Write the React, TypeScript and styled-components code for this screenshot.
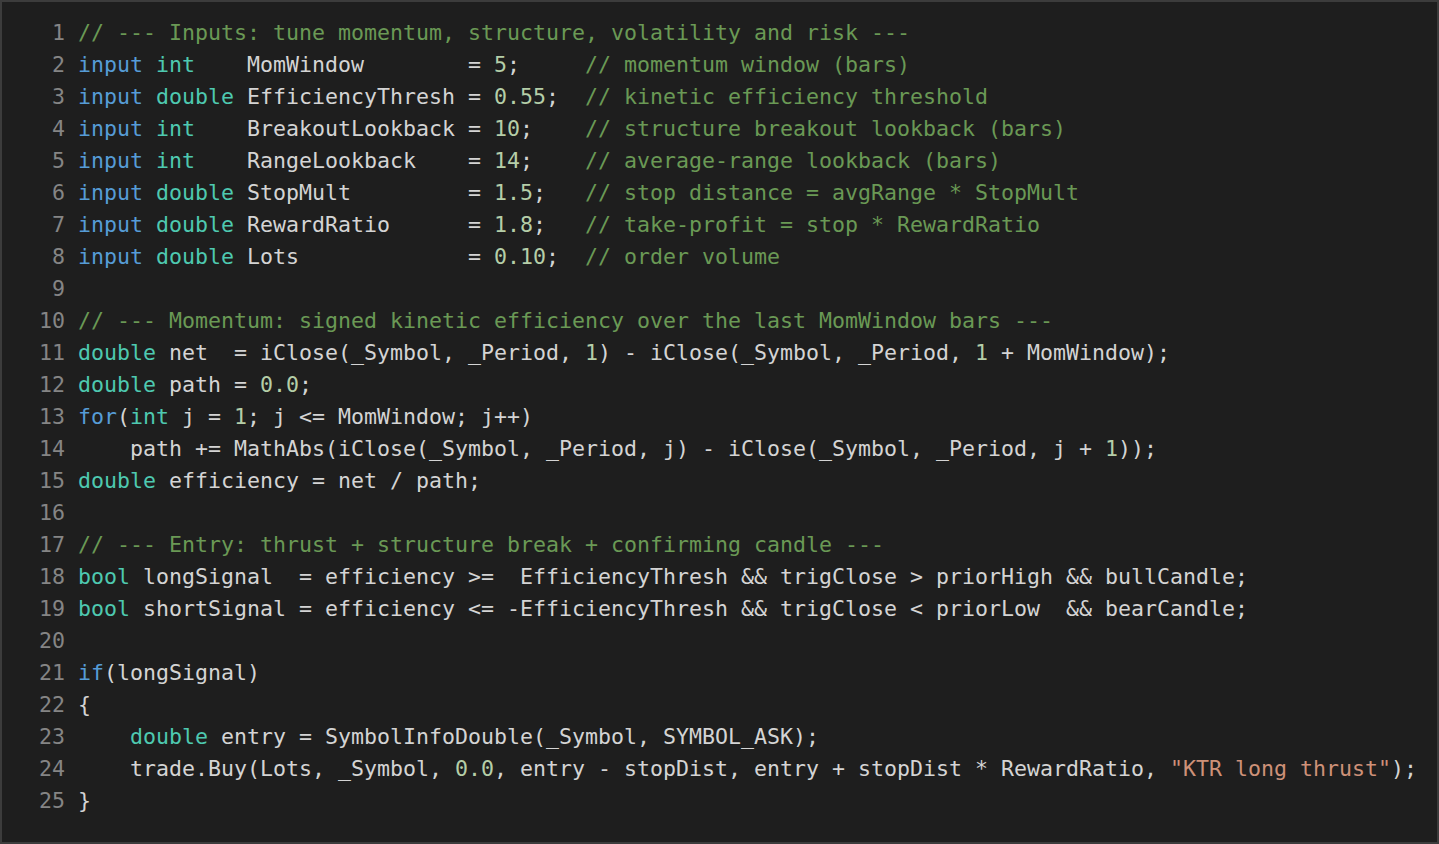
import React from "react";
import styled, { createGlobalStyle } from "styled-components";

const GlobalStyle = createGlobalStyle`
  html, body {
    margin: 0;
    padding: 0;
    background: #1e1e1e;
  }
  #root {
    height: 100vh;
  }
`;

const Frame = styled.div`
  box-sizing: border-box;
  width: 100vw;
  height: 100vh;
  background: #1e1e1e;
  border: 2px solid #3c3c3c;
  padding: 15px 0 0 37px;
  overflow: hidden;
  font-family: "DejaVu Sans Mono", "Liberation Mono", monospace;
  font-size: 21.6px;
  line-height: 32px;
  color: #d4d4d4;
`;

const Lines = styled.div`
  display: grid;
  grid-template-columns: 26px 1fr;
  column-gap: 13px;
`;

const LineNo = styled.div`
  text-align: right;
  color: #858585;
  white-space: pre;
`;

const Code = styled.div`
  white-space: pre;
`;

type Kind = "comment" | "keyword" | "type" | "number" | "string" | "plain";

const colors: Record<Kind, string> = {
  comment: "#6a9955",
  keyword: "#569cd6",
  type: "#4ec9b0",
  number: "#b5cea8",
  string: "#ce9178",
  plain: "#d4d4d4",
};

const Tok = styled.span<{ $kind: Kind }>`
  color: ${(p) => colors[p.$kind]};
`;

const source = [
  "// --- Inputs: tune momentum, structure, volatility and risk ---",
  "input int    MomWindow        = 5;     // momentum window (bars)",
  "input double EfficiencyThresh = 0.55;  // kinetic efficiency threshold",
  "input int    BreakoutLookback = 10;    // structure breakout lookback (bars)",
  "input int    RangeLookback    = 14;    // average-range lookback (bars)",
  "input double StopMult         = 1.5;   // stop distance = avgRange * StopMult",
  "input double RewardRatio      = 1.8;   // take-profit = stop * RewardRatio",
  "input double Lots             = 0.10;  // order volume",
  "",
  "// --- Momentum: signed kinetic efficiency over the last MomWindow bars ---",
  "double net  = iClose(_Symbol, _Period, 1) - iClose(_Symbol, _Period, 1 + MomWindow);",
  "double path = 0.0;",
  "for(int j = 1; j <= MomWindow; j++)",
  "    path += MathAbs(iClose(_Symbol, _Period, j) - iClose(_Symbol, _Period, j + 1));",
  "double efficiency = net / path;",
  "",
  "// --- Entry: thrust + structure break + confirming candle ---",
  "bool longSignal  = efficiency >=  EfficiencyThresh && trigClose > priorHigh && bullCandle;",
  "bool shortSignal = efficiency <= -EfficiencyThresh && trigClose < priorLow  && bearCandle;",
  "",
  "if(longSignal)",
  "{",
  "    double entry = SymbolInfoDouble(_Symbol, SYMBOL_ASK);",
  '    trade.Buy(Lots, _Symbol, 0.0, entry - stopDist, entry + stopDist * RewardRatio, "KTR long thrust");',
  "}",
];

const keywords = new Set(["input", "for", "if"]);
const types = new Set(["int", "double", "bool"]);

function tokenize(line: string): { text: string; kind: Kind }[] {
  const out: { text: string; kind: Kind }[] = [];
  let i = 0;
  let plain = "";
  const flush = () => {
    if (plain) {
      out.push({ text: plain, kind: "plain" });
      plain = "";
    }
  };
  while (i < line.length) {
    const rest = line.slice(i);
    if (rest.startsWith("//")) {
      flush();
      out.push({ text: rest, kind: "comment" });
      break;
    }
    if (line[i] === '"') {
      flush();
      const end = line.indexOf('"', i + 1);
      out.push({ text: line.slice(i, end + 1), kind: "string" });
      i = end + 1;
      continue;
    }
    const word = /^[A-Za-z_][A-Za-z0-9_]*/.exec(rest);
    if (word) {
      const w = word[0];
      if (keywords.has(w)) {
        flush();
        out.push({ text: w, kind: "keyword" });
      } else if (types.has(w)) {
        flush();
        out.push({ text: w, kind: "type" });
      } else {
        plain += w;
      }
      i += w.length;
      continue;
    }
    const num = /^[0-9]+(\.[0-9]+)?/.exec(rest);
    if (num) {
      flush();
      out.push({ text: num[0], kind: "number" });
      i += num[0].length;
      continue;
    }
    plain += line[i];
    i++;
  }
  flush();
  return out;
}

export default function App() {
  return (
    <>
      <GlobalStyle />
      <Frame>
        <Lines>
          {source.map((line, idx) => (
            <React.Fragment key={idx}>
              <LineNo>{idx + 1}</LineNo>
              <Code>
                {line === ""
                  ? " "
                  : tokenize(line).map((t, j) => (
                      <Tok key={j} $kind={t.kind}>
                        {t.text}
                      </Tok>
                    ))}
              </Code>
            </React.Fragment>
          ))}
        </Lines>
      </Frame>
    </>
  );
}
